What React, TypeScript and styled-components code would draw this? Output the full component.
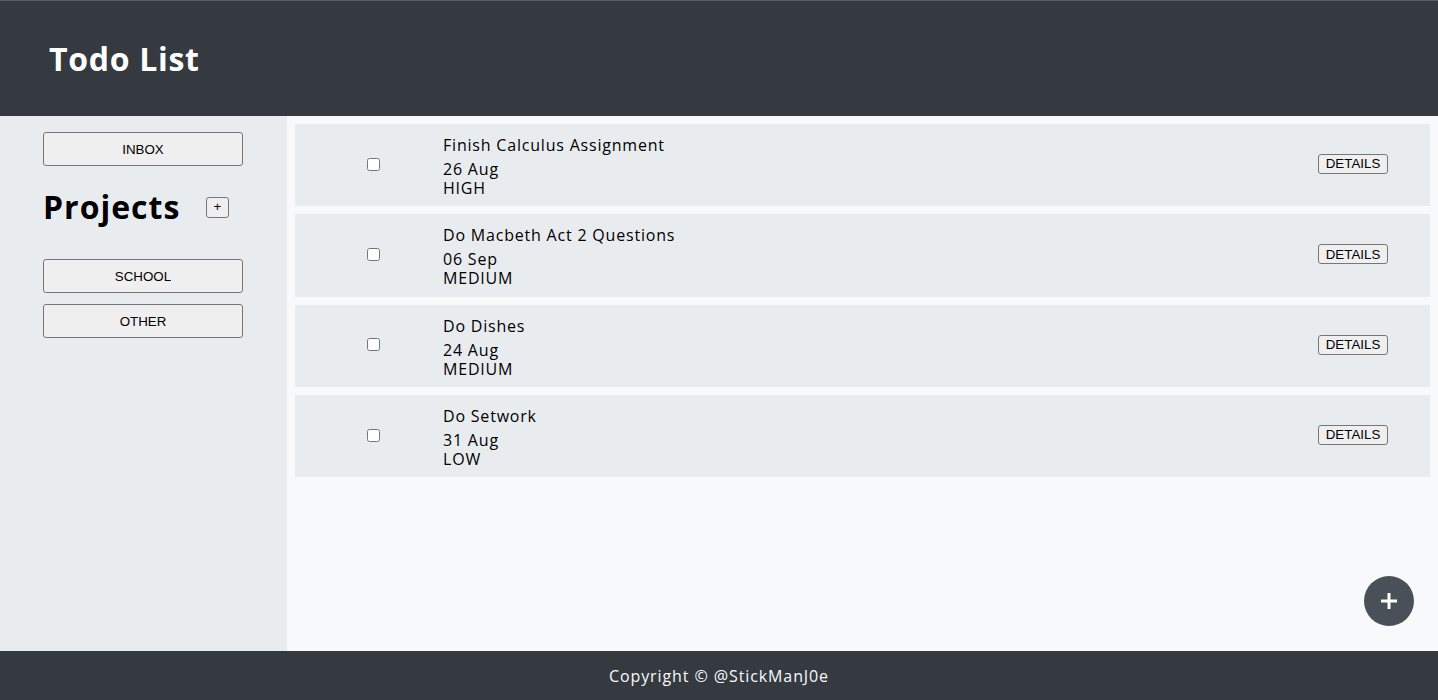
import React from "react";
import styled, { createGlobalStyle } from "styled-components";

const Global = createGlobalStyle`
  html, body { margin: 0; padding: 0; }
  body { font-family: "Open Sans", "Noto Sans", sans-serif; background: #f8f9fa; letter-spacing: 0.8px; }
  * { box-sizing: border-box; }
`;

const Page = styled.div`
  height: 700px;
  display: grid;
  grid-template-rows: 116px 1fr 49px;
`;

const Header = styled.header`
  background: #343a40;
  border-top: 1px solid #5a5f64;
  display: flex;
  align-items: center;
  padding-left: 49px;
`;

const Title = styled.h1`
  margin: 0;
  color: #ffffff;
  font-size: 32px;
  font-weight: 700;
  letter-spacing: 0.7px;
`;

const Body = styled.div`
  display: grid;
  grid-template-columns: 287px 1fr;
  min-height: 0;
`;

const Sidebar = styled.aside`
  background: #e9ecef;
  padding: 16px 0 0 43px;
  display: flex;
  flex-direction: column;
`;

const NavButton = styled.button`
  width: 200px;
  height: 34px;
  background: #efefef;
  border: 1px solid #767676;
  border-radius: 3px;
  font-family: "Liberation Sans", Arial, sans-serif;
  font-size: 13.33px;
  letter-spacing: normal;
  color: #000;
  padding: 0;
`;

const ProjectsRow = styled.div`
  width: 186px;
  height: 40px;
  margin: 21px 0 32px;
  display: flex;
  align-items: center;
  justify-content: space-between;
`;

const ProjectsTitle = styled.h2`
  margin: 0;
  font-size: 32px;
  font-weight: 700;
  line-height: 40px;
  letter-spacing: 1px;
  color: #000;
`;

const SmallButton = styled.button<{ $w?: number }>`
  height: ${(p) => (p.$w ? "20px" : "21px")};
  width: ${(p) => (p.$w ? `${p.$w}px` : "23px")};
  background: #efefef;
  border: 1px solid #767676;
  border-radius: 3px;
  font-family: "Liberation Sans", Arial, sans-serif;
  font-size: 13.33px;
  letter-spacing: normal;
  color: #000;
  padding: 0;
  line-height: 1;
`;

const ProjectList = styled.div`
  display: flex;
  flex-direction: column;
  gap: 11px;
`;

const Main = styled.main`
  position: relative;
  background: #f8f9fa;
  padding: 8px;
  display: flex;
  flex-direction: column;
  gap: 8px;
`;

const Card = styled.div`
  height: 82.33px;
  flex-shrink: 0;
  background: #e9ecef;
  display: flex;
  align-items: center;
  padding-bottom: 2px;
`;

const CheckCell = styled.div`
  width: 148px;
  padding-left: 8px;
  display: flex;
  justify-content: center;
  align-items: center;
  input { margin: 0; width: 13px; height: 13px; }
`;

const TextCell = styled.div`
  flex: 1;
  align-self: flex-start;
  padding-top: 12px;
  color: #000;
  font-size: 16px;
`;

const TaskTitle = styled.div`
  line-height: 19px;
  margin-bottom: 5px;
`;

const Line = styled.div`
  line-height: 19px;
`;

const ActionCell = styled.div`
  width: 154px;
  display: flex;
  justify-content: center;
`;

const Fab = styled.button`
  position: absolute;
  right: 24px;
  bottom: 25px;
  width: 50px;
  height: 50px;
  border-radius: 50%;
  border: none;
  background: #495057;
  display: flex;
  align-items: center;
  justify-content: center;
  padding: 0;
`;

const Footer = styled.footer`
  background: #343a40;
  color: #f8f9fa;
  display: flex;
  align-items: center;
  justify-content: center;
  font-size: 16px;
  letter-spacing: 0.9px;
`;

const tasks = [
  { title: "Finish Calculus Assignment", date: "26 Aug", priority: "HIGH" },
  { title: "Do Macbeth Act 2 Questions", date: "06 Sep", priority: "MEDIUM" },
  { title: "Do Dishes", date: "24 Aug", priority: "MEDIUM" },
  { title: "Do Setwork", date: "31 Aug", priority: "LOW" },
];

export default function App() {
  return (
    <Page>
      <Global />
      <Header>
        <Title>Todo List</Title>
      </Header>
      <Body>
        <Sidebar>
          <NavButton>INBOX</NavButton>
          <ProjectsRow>
            <ProjectsTitle>Projects</ProjectsTitle>
            <SmallButton>+</SmallButton>
          </ProjectsRow>
          <ProjectList>
            <NavButton>SCHOOL</NavButton>
            <NavButton>OTHER</NavButton>
          </ProjectList>
        </Sidebar>
        <Main>
          {tasks.map((t) => (
            <Card key={t.title}>
              <CheckCell>
                <input type="checkbox" />
              </CheckCell>
              <TextCell>
                <TaskTitle>{t.title}</TaskTitle>
                <Line>{t.date}</Line>
                <Line>{t.priority}</Line>
              </TextCell>
              <ActionCell>
                <SmallButton $w={70}>DETAILS</SmallButton>
              </ActionCell>
            </Card>
          ))}
          <Fab aria-label="Add task">
            <svg width="18" height="18" viewBox="0 0 18 18">
              <rect x="7.5" y="1" width="3" height="16" fill="#fff" />
              <rect x="1" y="7.5" width="16" height="3" fill="#fff" />
            </svg>
          </Fab>
        </Main>
      </Body>
      <Footer>Copyright © @StickManJ0e</Footer>
    </Page>
  );
}
